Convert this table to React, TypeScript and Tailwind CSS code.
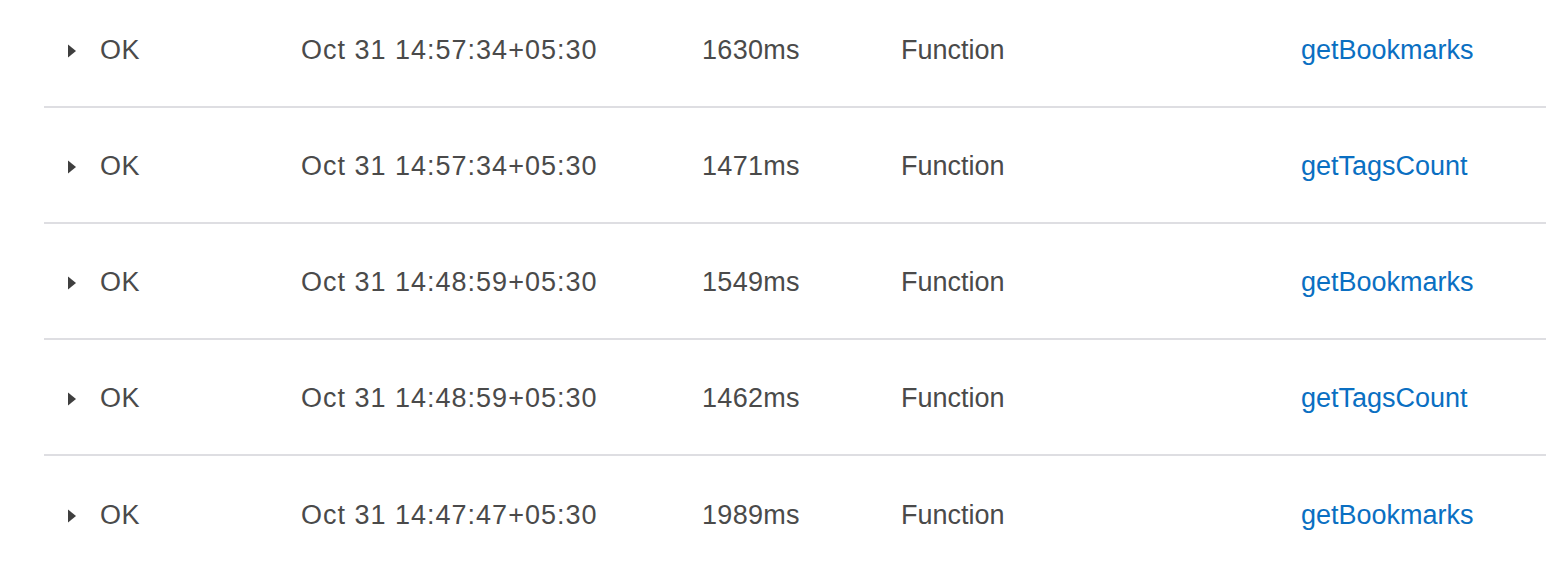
import { Fragment } from "react";

type Invocation = {
  status: string;
  time: string;
  duration: string;
  kind: string;
  name: string;
};

const rows: Invocation[] = [
  { status: "OK", time: "Oct 31 14:57:34+05:30", duration: "1630ms", kind: "Function", name: "getBookmarks" },
  { status: "OK", time: "Oct 31 14:57:34+05:30", duration: "1471ms", kind: "Function", name: "getTagsCount" },
  { status: "OK", time: "Oct 31 14:48:59+05:30", duration: "1549ms", kind: "Function", name: "getBookmarks" },
  { status: "OK", time: "Oct 31 14:48:59+05:30", duration: "1462ms", kind: "Function", name: "getTagsCount" },
  { status: "OK", time: "Oct 31 14:47:47+05:30", duration: "1989ms", kind: "Function", name: "getBookmarks" },
];

function Caret() {
  return (
    <svg width="8" height="14" viewBox="0 0 8 14" className="shrink-0" aria-hidden="true">
      <path d="M0 0.5 L8 7 L0 13.5 Z" fill="#3f3f3f" />
    </svg>
  );
}

export default function App() {
  return (
    <div className="h-[564px] w-[1546px] overflow-hidden bg-white font-['Liberation_Sans',Arial,sans-serif] text-[27px] text-[#4a4a4a]">
      <div className="-mt-2 pl-11">
        {rows.map((r, i) => (
          <Fragment key={i}>
            <div
              className={`grid h-[116px] grid-cols-[257px_401px_199px_400px_1fr] items-center pt-[3px] ${
                i < rows.length - 1 ? "border-b-2 border-[#dedee2]" : ""
              }`}
            >
              <div className="flex items-center gap-6 pl-6">
                <Caret />
                <span className="tracking-[0.5px]">{r.status}</span>
              </div>
              <div className="tracking-[1px]">{r.time}</div>
              <div className="tracking-[0.3px]">{r.duration}</div>
              <div>{r.kind}</div>
              <div>
                <a href="#" className="text-[#0a6fc2]">
                  {r.name}
                </a>
              </div>
            </div>
          </Fragment>
        ))}
      </div>
    </div>
  );
}
